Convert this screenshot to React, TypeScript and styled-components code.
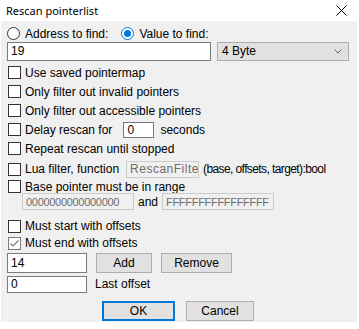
import * as React from 'react';
import styled, { createGlobalStyle } from 'styled-components';

const GlobalStyle = createGlobalStyle`
  html, body {
    margin: 0;
    padding: 0;
    background: #ffffff;
  }
`;

const Window = styled.div`
  width: 359px;
  height: 329px;
  background: #ffffff;
  font-family: "Liberation Sans", Arial, sans-serif;
  font-size: 12px;
  color: #000000;
  overflow: hidden;
`;

const TitleBar = styled.div`
  height: 21px;
  display: flex;
  align-items: center;
  justify-content: space-between;
  padding: 0 12px 0 6px;
  font-family: "Noto Sans", "Open Sans", sans-serif;
  font-size: 11px;
`;

const Body = styled.div`
  margin: 0 2px 0 1px;
  height: 301px;
  background: #f0f0f0;
  padding: 5px 0 0 6px;
  box-sizing: border-box;
  display: flex;
  flex-direction: column;
`;

const Row = styled.div<{ $h: number; $indent?: number; $gap?: number; $mt?: number }>`
  height: ${(p) => p.$h}px;
  margin-top: ${(p) => p.$mt ?? 0}px;
  display: flex;
  align-items: center;
  gap: ${(p) => p.$gap ?? 0}px;
  padding-left: ${(p) => p.$indent ?? 0}px;
  flex-shrink: 0;
  white-space: nowrap;
`;

const Label = styled.span<{ $ml?: number; $tight?: boolean }>`
  margin-left: ${(p) => p.$ml ?? 0}px;
  letter-spacing: ${(p) => (p.$tight ? '-0.6px' : 'normal')};
`;

const Box = styled.span<{ $checked?: boolean }>`
  width: 13px;
  height: 13px;
  box-sizing: border-box;
  border: 1px solid ${(p) => (p.$checked ? '#7a7a7a' : '#333333')};
  background: #ffffff;
  margin: 0 4px 0 1px;
  display: inline-flex;
  align-items: center;
  justify-content: center;
`;

const Radio = styled.span<{ $on?: boolean; $ml?: number }>`
  width: 13px;
  height: 13px;
  box-sizing: border-box;
  border-radius: 50%;
  border: 1px solid ${(p) => (p.$on ? '#0078d7' : '#333333')};
  background: #ffffff;
  margin: 0 5px 0 ${(p) => p.$ml ?? 0}px;
  display: inline-flex;
  align-items: center;
  justify-content: center;
  &::after {
    content: '';
    width: 7px;
    height: 7px;
    border-radius: 50%;
    background: ${(p) => (p.$on ? '#0078d7' : 'transparent')};
  }
`;

const Edit = styled.div<{ $w: number; $h?: number; $ml?: number; $disabled?: boolean }>`
  width: ${(p) => p.$w}px;
  height: ${(p) => p.$h ?? 19}px;
  margin-left: ${(p) => p.$ml ?? 0}px;
  box-sizing: border-box;
  background: ${(p) => (p.$disabled ? '#f0f0f0' : '#ffffff')};
  border: 1px solid ${(p) => (p.$disabled ? '#cccccc' : '#7a7a7a')};
  color: ${(p) => (p.$disabled ? '#6d6d6d' : '#000000')};
  padding-left: 3px;
  display: flex;
  align-items: center;
  overflow: hidden;
  white-space: nowrap;
`;

const HexText = styled.span`
  font-size: 11px;
  letter-spacing: -0.3px;
`;

const FuncText = styled.span`
  letter-spacing: 0.5px;
`;

const Combo = styled.div`
  width: 132px;
  height: 19px;
  box-sizing: border-box;
  background: #e1e1e1;
  border: 1px solid #adadad;
  display: flex;
  align-items: center;
  justify-content: space-between;
  padding: 0 6px 0 4px;
`;

const Button = styled.div<{ $w: number; $default?: boolean }>`
  width: ${(p) => p.$w}px;
  height: 20px;
  box-sizing: border-box;
  background: #e1e1e1;
  border: ${(p) => (p.$default ? '2px solid #0078d7' : '1px solid #adadad')};
  display: flex;
  align-items: center;
  justify-content: center;
`;

const Buttons = styled.div`
  display: flex;
  gap: 11px;
  padding-left: 95px;
  margin-top: 7px;
`;

const Check = ({ on }: { on?: boolean }) => (
  <Box $checked={on}>
    {on && (
      <svg width="11" height="11" viewBox="0 0 11 11">
        <path d="M1.5 5.5 L4 8 L9.5 2.5" fill="none" stroke="#7a7a7a" strokeWidth="1.2" />
      </svg>
    )}
  </Box>
);

export default function App() {
  return (
    <Window>
      <GlobalStyle />
      <TitleBar>
        <span>Rescan pointerlist</span>
        <svg width="11" height="11" viewBox="0 0 11 11">
          <path d="M0.5 0.5 L10.5 10.5 M10.5 0.5 L0.5 10.5" stroke="#000" strokeWidth="1" />
        </svg>
      </TitleBar>
      <Body>
        <Row $h={15}>
          <Radio />
          <Label>Address to find:</Label>
          <Radio $on $ml={13} />
          <Label>Value to find:</Label>
        </Row>
        <Row $h={20} $gap={6}>
          <Edit $w={204} $h={19}>19</Edit>
          <Combo>
            <span>4 Byte</span>
            <svg width="8" height="5" viewBox="0 0 8 5">
              <path d="M0.5 0.5 L4 4 L7.5 0.5" fill="none" stroke="#606060" strokeWidth="1" />
            </svg>
          </Combo>
        </Row>
        <Row $h={19} $mt={2}>
          <Check />
          <Label>Use saved pointermap</Label>
        </Row>
        <Row $h={19}>
          <Check />
          <Label>Only filter out invalid pointers</Label>
        </Row>
        <Row $h={19}>
          <Check />
          <Label>Only filter out accessible pointers</Label>
        </Row>
        <Row $h={19}>
          <Check />
          <Label>Delay rescan for</Label>
          <Edit $w={31} $h={16} $ml={11}>0</Edit>
          <Label $ml={6}>seconds</Label>
        </Row>
        <Row $h={19}>
          <Check />
          <Label>Repeat rescan until stopped</Label>
        </Row>
        <Row $h={22}>
          <Check />
          <Label>Lua filter, function</Label>
          <Edit $w={73} $h={17} $ml={7} $disabled>
            <FuncText>RescanFilter</FuncText>
          </Edit>
          <Label $ml={4} $tight>(base, offsets, target):bool</Label>
        </Row>
        <Row $h={13}>
          <Check />
          <Label>Base pointer must be in range</Label>
        </Row>
        <Row $h={17} $indent={15}>
          <Edit $w={112} $h={17} $disabled>
            <HexText>0000000000000000</HexText>
          </Edit>
          <Label $ml={4}>and</Label>
          <Edit $w={112} $h={17} $ml={4} $disabled>
            <HexText>FFFFFFFFFFFFFFFF</HexText>
          </Edit>
        </Row>
        <Row $h={18} $mt={7}>
          <Check />
          <Label>Must start with offsets</Label>
        </Row>
        <Row $h={16}>
          <Check on />
          <Label>Must end with offsets</Label>
        </Row>
        <Row $h={22} $gap={9} $mt={1}>
          <Edit $w={80} $h={20}>14</Edit>
          <Button $w={56}>Add</Button>
          <Button $w={71}>Remove</Button>
        </Row>
        <Row $h={20} $gap={8}>
          <Edit $w={80} $h={17}>0</Edit>
          <Label>Last offset</Label>
        </Row>
        <Buttons>
          <Button $w={73} $default>OK</Button>
          <Button $w={68}>Cancel</Button>
        </Buttons>
      </Body>
    </Window>
  );
}
